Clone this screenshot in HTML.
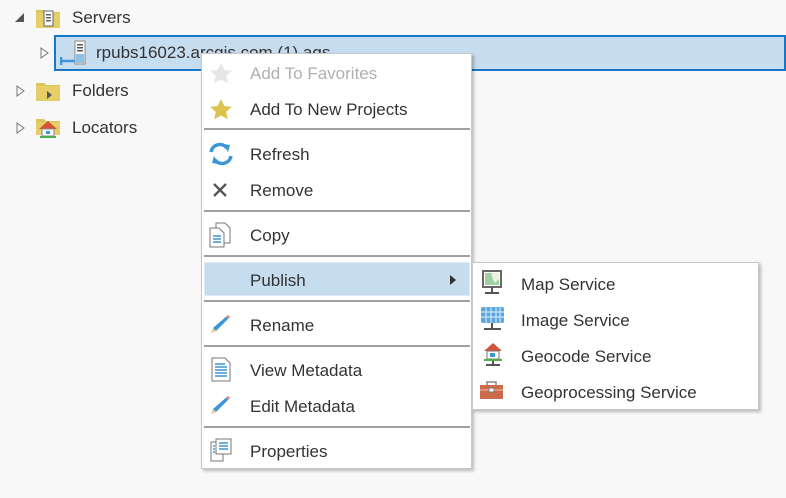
<!DOCTYPE html>
<html><head><style>
body{margin:0;width:786px;height:498px;background:#f8f8f8;font-family:"Segoe UI","Liberation Sans",sans-serif;color:#333;font-size:17px;position:relative;overflow:hidden}
.a{position:absolute;white-space:nowrap}
.t{line-height:20px}
.sep{position:absolute;left:204px;width:266px;height:2px;background:#a0a0a0}
</style></head><body>
<!-- tree -->
<svg class="a" style="left:14px;top:12px" width="12" height="12"><path d="M10 1 L10 10 L1 10 Z" fill="#555"/></svg>
<svg class="a" style="left:36px;top:8px" width="24" height="20"><path d="M0 2h8l2 2h14v16H0z" fill="#dcc45a"/><rect x="0" y="5" width="24" height="15" fill="#e6cf66"/><rect x="8" y="3" width="9" height="15" fill="#fff" stroke="#666"/><rect x="10" y="6" width="5" height="1.5" fill="#666"/><rect x="10" y="9" width="5" height="1.5" fill="#666"/><rect x="10" y="12" width="5" height="1.5" fill="#666"/></svg>
<div class="a t" style="left:72px;top:8px">Servers</div>
<div class="a" style="left:54px;top:35px;width:732px;height:36px;box-sizing:border-box;border:2px solid #1877c5;background:#c6dcef"></div>
<svg class="a" style="left:40px;top:47px" width="10" height="12"><path d="M1 1 L8 6 L1 11 Z" fill="none" stroke="#777"/></svg>
<svg class="a" style="left:60px;top:40px" width="26" height="26"><path d="M1 17v8M1 21h14" stroke="#3a96d6" stroke-width="2.5"/><rect x="15" y="1" width="10" height="23" fill="#fff" stroke="#888"/><rect x="17" y="4" width="6" height="1.5" fill="#555"/><rect x="17" y="7" width="6" height="1.5" fill="#555"/><rect x="17" y="10" width="6" height="1.5" fill="#555"/><rect x="16" y="14" width="8" height="9" fill="#8dc1e8"/></svg>
<div class="a t" style="left:96px;top:43px">rpubs16023.arcgis.com (1).ags</div>
<svg class="a" style="left:16px;top:85px" width="10" height="12"><path d="M1 1 L8 6 L1 11 Z" fill="none" stroke="#777"/></svg>
<svg class="a" style="left:36px;top:81px" width="24" height="20"><path d="M0 2h8l2 2h14v16H0z" fill="#dcc45a"/><rect x="0" y="5" width="24" height="15" fill="#e6cf66"/><path d="M11 10v8l5-4z" fill="#555"/></svg>
<div class="a t" style="left:72px;top:81px">Folders</div>
<svg class="a" style="left:16px;top:122px" width="10" height="12"><path d="M1 1 L8 6 L1 11 Z" fill="none" stroke="#777"/></svg>
<svg class="a" style="left:36px;top:117px" width="24" height="22"><path d="M0 2h8l2 2h14v14H0z" fill="#dcc45a"/><rect x="0" y="5" width="24" height="13" fill="#e6cf66"/><path d="M3 12l9-8 9 8z" fill="#d2553a"/><rect x="6" y="12" width="12" height="7" fill="#fff" stroke="#888"/><rect x="10" y="14" width="4" height="3" fill="#3a96d6"/><rect x="4" y="19" width="16" height="2" fill="#4caf50"/></svg>
<div class="a t" style="left:72px;top:118px">Locators</div>

<!-- menu -->
<div class="a" style="left:201px;top:53px;width:271px;height:416px;background:#fff;border:1px solid #c8c8c8;box-sizing:border-box;box-shadow:2px 2px 3px rgba(0,0,0,.25)"></div>
<svg class="a" style="left:209px;top:62px" width="24" height="22"><path d="M12 1l3.3 7 7.5.8-5.6 5.1 1.6 7.4L12 17.5 5.2 21.3l1.6-7.4L1.2 8.8l7.5-.8z" fill="#e6e6e6"/></svg>
<div class="a t" style="left:250px;top:64px;color:#b0b0b0">Add To Favorites</div>
<svg class="a" style="left:209px;top:98px" width="24" height="22"><path d="M12 1l3.3 7 7.5.8-5.6 5.1 1.6 7.4L12 17.5 5.2 21.3l1.6-7.4L1.2 8.8l7.5-.8z" fill="#dcc24e"/></svg>
<div class="a t" style="left:250px;top:100px">Add To New Projects</div>
<div class="sep" style="top:128px"></div>
<svg class="a" style="left:208px;top:142px" width="26" height="24"><path d="M3 10a9 9 0 0 1 16-4" fill="none" stroke="#3a96d6" stroke-width="3.5"/><path d="M15 2l7 1-2 7z" fill="#3a96d6"/><path d="M23 14a9 9 0 0 1-16 4" fill="none" stroke="#3a96d6" stroke-width="3.5"/><path d="M11 22l-7-1 2-7z" fill="#3a96d6"/></svg>
<div class="a t" style="left:250px;top:145px">Refresh</div>
<svg class="a" style="left:212px;top:182px" width="16" height="16"><path d="M2 2l12 12M14 2L2 14" stroke="#555" stroke-width="2.3"/></svg>
<div class="a t" style="left:250px;top:181px">Remove</div>
<div class="sep" style="top:210px"></div>
<svg class="a" style="left:208px;top:222px" width="24" height="26"><path d="M8 1h9l5 5v15H8z" fill="#fff" stroke="#777"/><path d="M2 6h9l5 5v14H2z" fill="#fff" stroke="#777"/><path d="M5 14h8M5 17h8M5 20h8" stroke="#3a96d6" stroke-width="1.5"/></svg>
<div class="a t" style="left:250px;top:226px">Copy</div>
<div class="sep" style="top:255px"></div>
<div class="a" style="left:204px;top:262px;width:266px;height:34px;background:#c6dcef;border:1px solid #dde9f4;box-sizing:border-box"></div>
<div class="a t" style="left:250px;top:271px">Publish</div>
<svg class="a" style="left:449px;top:274px" width="8" height="12"><path d="M1 1l6 5-6 5z" fill="#333"/></svg>
<div class="sep" style="top:300px"></div>
<svg class="a" style="left:209px;top:313px" width="22" height="22"><path d="M19 2l2 2L7 18l-3-3z" fill="#3a96d6"/><path d="M17 4l2-2 2 2-2 2z" fill="#e88b7a"/><path d="M4 15l3 3-5 2z" fill="#e8c890"/></svg>
<div class="a t" style="left:250px;top:316px">Rename</div>
<div class="sep" style="top:345px"></div>
<svg class="a" style="left:210px;top:357px" width="22" height="26"><path d="M2 1h13l5 5v18H2z" fill="#fff" stroke="#777"/><path d="M5 7h10M5 10h12M5 13h12M5 16h12M5 19h12" stroke="#3a96d6" stroke-width="1.5"/></svg>
<div class="a t" style="left:250px;top:361px">View Metadata</div>
<svg class="a" style="left:209px;top:394px" width="22" height="22"><path d="M19 2l2 2L7 18l-3-3z" fill="#3a96d6"/><path d="M17 4l2-2 2 2-2 2z" fill="#e88b7a"/><path d="M4 15l3 3-5 2z" fill="#e8c890"/></svg>
<div class="a t" style="left:250px;top:397px">Edit Metadata</div>
<div class="sep" style="top:426px"></div>
<svg class="a" style="left:209px;top:438px" width="24" height="26"><rect x="2" y="4" width="12" height="19" fill="#fff" stroke="#777"/><rect x="7" y="1" width="15" height="15" fill="#fff" stroke="#777"/><path d="M4 8h2M4 11h2M4 14h2M10 5h9M10 8h9M10 11h9" stroke="#3a96d6" stroke-width="1.5"/></svg>
<div class="a t" style="left:250px;top:442px">Properties</div>

<!-- submenu -->
<div class="a" style="left:472px;top:262px;width:287px;height:148px;background:#fff;border:1px solid #c8c8c8;box-sizing:border-box;box-shadow:2px 2px 3px rgba(0,0,0,.25)"></div>
<svg class="a" style="left:481px;top:270px" width="24" height="26"><rect x="2" y="1" width="18" height="16" fill="#fff" stroke="#666" stroke-width="2"/><rect x="4" y="3" width="14" height="12" fill="#9fcf9f"/><path d="M10 3l8 0 0 6-4 4-2-3z" fill="#e8f0e0"/><path d="M11 17v5M4 23h14" stroke="#555" stroke-width="2"/></svg>
<div class="a t" style="left:521px;top:275px">Map Service</div>
<svg class="a" style="left:480px;top:306px" width="26" height="26"><rect x="1" y="1" width="23" height="16" rx="2" fill="#5aa7e0"/><path d="M6 1v16M11 1v16M16 1v16M20 1v16M1 6h23M1 11h23" stroke="#cde6f8" stroke-width="1.2"/><path d="M12 17v5M4 23h17" stroke="#555" stroke-width="2"/></svg>
<div class="a t" style="left:521px;top:311px">Image Service</div>
<svg class="a" style="left:482px;top:341px" width="24" height="26"><path d="M2 10l9-8 9 8z" fill="#d2553a"/><rect x="5" y="10" width="12" height="8" fill="#fff" stroke="#777"/><rect x="8" y="12" width="5" height="4" fill="#3a96d6"/><rect x="2" y="18" width="18" height="2" fill="#4caf50"/><path d="M11 20v3M4 24h14" stroke="#555" stroke-width="2"/></svg>
<div class="a t" style="left:521px;top:347px">Geocode Service</div>
<svg class="a" style="left:479px;top:381px" width="26" height="20"><rect x="8" y="1" width="9" height="4" fill="none" stroke="#888" stroke-width="1.5"/><rect x="1" y="4" width="23" height="14" fill="#cd6a4a"/><path d="M1 9h23" stroke="#f0c0b0"/><rect x="10" y="7" width="5" height="4" fill="#fff" stroke="#777"/></svg>
<div class="a t" style="left:521px;top:383px">Geoprocessing Service</div>
</body></html>
